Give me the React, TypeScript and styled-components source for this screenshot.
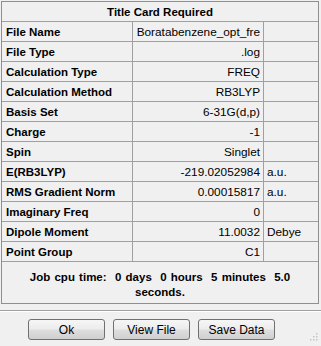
import React from "react";
import styled, { createGlobalStyle } from "styled-components";

const Global = createGlobalStyle`
  html, body { margin: 0; padding: 0; background: #f0f0f0; }
  body { font-family: "Liberation Sans", Arial, sans-serif; font-size: 12px; color: #000; }
`;

const Window = styled.div`
  width: 321px;
  height: 346px;
  box-sizing: border-box;
  padding-top: 1px;
  background: #f0f0f0;
  position: relative;
  overflow: hidden;
`;

const Panel = styled.div`
  margin-left: 1px;
  width: 318px;
  height: 303px;
  box-sizing: border-box;
  border: 1px solid #8e8f8f;
  display: flex;
  flex-direction: column;
`;

const Header = styled.div`
  height: 20px;
  box-sizing: border-box;
  border-bottom: 1px solid #a0a0a0;
  display: flex;
  align-items: center;
  justify-content: center;
  font-weight: bold;
  font-size: 11.5px;
`;

const Grid = styled.div`
  display: grid;
  grid-template-columns: 131px 131px 1fr;
`;

const Cell = styled.div<{ $kind: "label" | "value" | "unit" }>`
  height: 20px;
  box-sizing: border-box;
  border-bottom: 1px solid #a0a0a0;
  border-right: ${(p) => (p.$kind === "unit" ? "none" : "1px solid #a0a0a0")};
  display: flex;
  align-items: center;
  white-space: nowrap;
  overflow: hidden;
  font-weight: ${(p) => (p.$kind === "label" ? "bold" : "normal")};
  font-size: ${(p) => (p.$kind === "label" ? "11.5px" : "11.8px")};
  justify-content: ${(p) => (p.$kind === "value" ? "flex-end" : "flex-start")};
  padding: ${(p) =>
    p.$kind === "label" ? "0 0 0 4px" : p.$kind === "value" ? "0 3px 0 0" : "0 0 0 3px"};
`;

const JobTime = styled.div`
  padding: 8px 20px 0;
  text-align: center;
  font-weight: bold;
  font-size: 11.5px;
  line-height: 15px;
  word-spacing: 1px;
`;

const Separator = styled.div`
  margin-top: 6px;
  height: 0;
  border-top: 1px solid #a0a0a0;
  border-bottom: 1px solid #ffffff;
`;

const ButtonRow = styled.div`
  display: flex;
  gap: 8px;
  padding: 7px 0 0 28px;
`;

const Button = styled.button`
  width: 77px;
  height: 21px;
  box-sizing: border-box;
  border: 1px solid #707070;
  border-radius: 3px;
  background: linear-gradient(#f6f6f6 0%, #ececec 48%, #dedede 52%, #d0d0d0 100%);
  font-family: "Liberation Sans", Arial, sans-serif;
  font-size: 12px;
  color: #000;
  padding: 0;
`;

const Grip = styled.svg`
  position: absolute;
  right: 3px;
  bottom: 3px;
`;

const rows: [string, string, string][] = [
  ["File Name", "Boratabenzene_opt_fre", ""],
  ["File Type", ".log", ""],
  ["Calculation Type", "FREQ", ""],
  ["Calculation Method", "RB3LYP", ""],
  ["Basis Set", "6-31G(d,p)", ""],
  ["Charge", "-1", ""],
  ["Spin", "Singlet", ""],
  ["E(RB3LYP)", "-219.02052984", "a.u."],
  ["RMS Gradient Norm", "0.00015817", "a.u."],
  ["Imaginary Freq", "0", ""],
  ["Dipole Moment", "11.0032", "Debye"],
  ["Point Group", "C1", ""],
];

export default function App() {
  return (
    <Window>
      <Global />
      <Panel>
        <Header>Title Card Required</Header>
        <Grid>
          {rows.map(([l, v, u]) => (
            <React.Fragment key={l}>
              <Cell $kind="label">{l}</Cell>
              <Cell $kind="value">{v}</Cell>
              <Cell $kind="unit">{u}</Cell>
            </React.Fragment>
          ))}
        </Grid>
        <JobTime>Job cpu time:&nbsp; 0 days&nbsp; 0 hours&nbsp; 5 minutes&nbsp; 5.0 seconds.</JobTime>
      </Panel>
      <Separator />
      <ButtonRow>
        <Button>Ok</Button>
        <Button>View File</Button>
        <Button>Save Data</Button>
      </ButtonRow>
      <Grip width="10" height="10" viewBox="0 0 10 10">
        {[[8, 0], [8, 3], [5, 3], [8, 6], [5, 6], [2, 6]].map(([x, y], i) => (
          <rect key={i} x={x} y={y} width="1.5" height="1.5" fill="#c4c4c4" />
        ))}
      </Grip>
    </Window>
  );
}
